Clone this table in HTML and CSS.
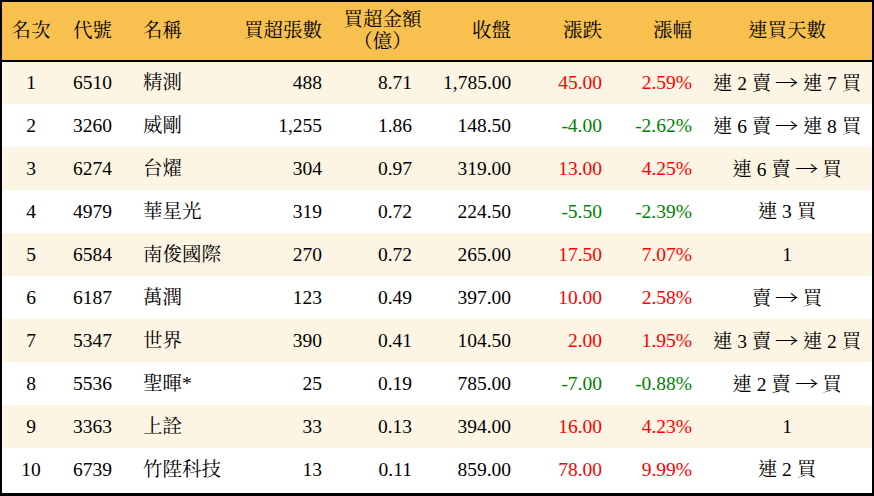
FILE: index.html
```html
<!DOCTYPE html>
<html lang="zh-Hant">
<head>
<meta charset="utf-8">
<title>買超排行</title>
<link rel="stylesheet" href="styles.css">
</head>
<body>
<div class="frame">
<table class="rank">
  <colgroup>
    <col class="c1"><col class="c2"><col class="c3"><col class="c4"><col class="c5"><col class="c6"><col class="c7"><col class="c8"><col class="c9">
  </colgroup>
  <thead>
    <tr>
      <th class="ctr">名次</th>
      <th class="lft">代號</th>
      <th class="lft">名稱</th>
      <th class="rgt">買超張數</th>
      <th class="amt">買超金額<br>（億）</th>
      <th class="rgt">收盤</th>
      <th class="rgt">漲跌</th>
      <th class="rgt">漲幅</th>
      <th class="days">連買天數</th>
    </tr>
  </thead>
  <tbody>
    <tr><td class="ctr">1</td><td class="lft">6510</td><td class="lft">精測</td><td class="rgt">488</td><td class="amtv">8.71</td><td class="rgt">1,785.00</td><td class="rgt up">45.00</td><td class="rgt up">2.59%</td><td class="days">連 2 賣 <span class="arr">→</span> 連 7 買</td></tr>
    <tr><td class="ctr">2</td><td class="lft">3260</td><td class="lft">威剛</td><td class="rgt">1,255</td><td class="amtv">1.86</td><td class="rgt">148.50</td><td class="rgt dn">-4.00</td><td class="rgt dn">-2.62%</td><td class="days">連 6 賣 <span class="arr">→</span> 連 8 買</td></tr>
    <tr><td class="ctr">3</td><td class="lft">6274</td><td class="lft">台燿</td><td class="rgt">304</td><td class="amtv">0.97</td><td class="rgt">319.00</td><td class="rgt up">13.00</td><td class="rgt up">4.25%</td><td class="days">連 6 賣 <span class="arr">→</span> 買</td></tr>
    <tr><td class="ctr">4</td><td class="lft">4979</td><td class="lft">華星光</td><td class="rgt">319</td><td class="amtv">0.72</td><td class="rgt">224.50</td><td class="rgt dn">-5.50</td><td class="rgt dn">-2.39%</td><td class="days">連 3 買</td></tr>
    <tr><td class="ctr">5</td><td class="lft">6584</td><td class="lft">南俊國際</td><td class="rgt">270</td><td class="amtv">0.72</td><td class="rgt">265.00</td><td class="rgt up">17.50</td><td class="rgt up">7.07%</td><td class="days">1</td></tr>
    <tr><td class="ctr">6</td><td class="lft">6187</td><td class="lft">萬潤</td><td class="rgt">123</td><td class="amtv">0.49</td><td class="rgt">397.00</td><td class="rgt up">10.00</td><td class="rgt up">2.58%</td><td class="days">賣 <span class="arr">→</span> 買</td></tr>
    <tr><td class="ctr">7</td><td class="lft">5347</td><td class="lft">世界</td><td class="rgt">390</td><td class="amtv">0.41</td><td class="rgt">104.50</td><td class="rgt up">2.00</td><td class="rgt up">1.95%</td><td class="days">連 3 賣 <span class="arr">→</span> 連 2 買</td></tr>
    <tr><td class="ctr">8</td><td class="lft">5536</td><td class="lft">聖暉*</td><td class="rgt">25</td><td class="amtv">0.19</td><td class="rgt">785.00</td><td class="rgt dn">-7.00</td><td class="rgt dn">-0.88%</td><td class="days">連 2 賣 <span class="arr">→</span> 買</td></tr>
    <tr><td class="ctr">9</td><td class="lft">3363</td><td class="lft">上詮</td><td class="rgt">33</td><td class="amtv">0.13</td><td class="rgt">394.00</td><td class="rgt up">16.00</td><td class="rgt up">4.23%</td><td class="days">1</td></tr>
    <tr><td class="ctr">10</td><td class="lft">6739</td><td class="lft">竹陞科技</td><td class="rgt">13</td><td class="amtv">0.11</td><td class="rgt">859.00</td><td class="rgt up">78.00</td><td class="rgt up">9.99%</td><td class="days">連 2 買</td></tr>
  </tbody>
</table>
</div>
</body>
</html>
```

FILE: styles.css
```css
html, body {
  margin: 0;
  padding: 0;
  background: #ffffff;
}
.frame {
  width: 874px;
  height: 496px;
  box-sizing: border-box;
  border: 2px solid #000;
  border-bottom-width: 3px;
  overflow: hidden;
}
.rank {
  width: 870px;
  border-collapse: collapse;
  table-layout: fixed;
  font-family: "Liberation Serif", "Noto Serif CJK TC", "Noto Sans CJK TC", serif;
  font-size: 19.5px;
  color: #000;
}
.c1 { width: 58px; }
.c2 { width: 70px; }
.c3 { width: 90px; }
.c4 { width: 115px; }
.c5 { width: 95px; }
.c6 { width: 94px; }
.c7 { width: 91px; }
.c8 { width: 90px; }
.c9 { width: 167px; }
.rank th, .rank td {
  padding: 0 13px;
  white-space: nowrap;
  vertical-align: middle;
}
.rank thead tr {
  height: 59px;
  background: #f8c14f;
  border-bottom: 2px solid #000;
}
.rank th {
  font-weight: normal;
  line-height: 22px;
}
.rank tbody tr {
  height: 43px;
}
.rank tbody tr:nth-child(odd) {
  background: #fdf5e3;
}
.rank td {
  line-height: 22px;
}
.rank .ctr { text-align: center; padding: 0; }
.rank .lft { text-align: left; }
.rank .rgt { text-align: right; }
.rank .amt { text-align: center; padding: 0; }
.rank .amtv { text-align: right; padding-right: 18px; }
.rank .days { text-align: center; padding: 0 3px 0 0; }
.arr {
  display: inline-block;
  font-family: "Noto Sans CJK TC", sans-serif;
  font-weight: 300;
  transform: scaleX(1.2);
  margin: 0 1px;
}
.up { color: #ff0000; }
.dn { color: #008000; }
```
